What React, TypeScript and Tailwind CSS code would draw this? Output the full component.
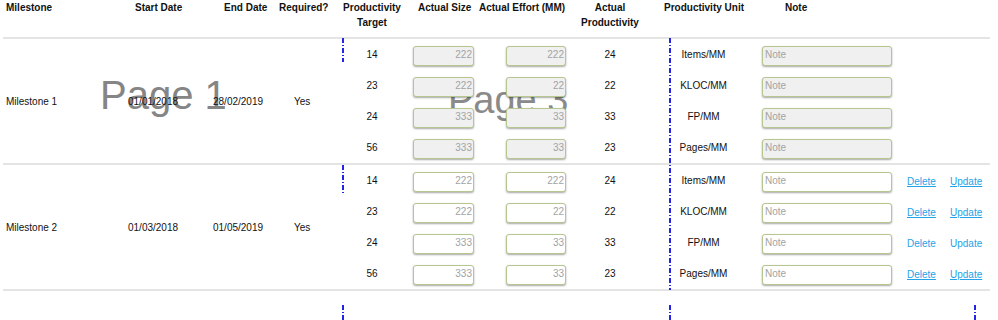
import React from 'react';

type SubRow = {
  target: string;
  size: string;
  effort: string;
  productivity: string;
  unit: string;
  linkUnderline: boolean;
};

type Milestone = {
  name: string;
  start: string;
  end: string;
  required: string;
  locked: boolean;
  rows: SubRow[];
};

const milestones: Milestone[] = [
  {
    name: 'Milestone 1',
    start: '01/01/2018',
    end: '28/02/2019',
    required: 'Yes',
    locked: true,
    rows: [
      { target: '14', size: '222', effort: '222', productivity: '24', unit: 'Items/MM', linkUnderline: true },
      { target: '23', size: '222', effort: '22', productivity: '22', unit: 'KLOC/MM', linkUnderline: true },
      { target: '24', size: '333', effort: '33', productivity: '33', unit: 'FP/MM', linkUnderline: false },
      { target: '56', size: '333', effort: '33', productivity: '23', unit: 'Pages/MM', linkUnderline: true },
    ],
  },
  {
    name: 'Milestone 2',
    start: '01/03/2018',
    end: '01/05/2019',
    required: 'Yes',
    locked: false,
    rows: [
      { target: '14', size: '222', effort: '222', productivity: '24', unit: 'Items/MM', linkUnderline: true },
      { target: '23', size: '222', effort: '22', productivity: '22', unit: 'KLOC/MM', linkUnderline: true },
      { target: '24', size: '333', effort: '33', productivity: '33', unit: 'FP/MM', linkUnderline: false },
      { target: '56', size: '333', effort: '33', productivity: '23', unit: 'Pages/MM', linkUnderline: true },
    ],
  },
];

const Box = ({ value, width, locked, align }: { value: string; width: string; locked: boolean; align: 'left' | 'right' }) => (
  <div
    className={`h-[20px] ${width} rounded-[3px] border border-[#b5c78f] shadow-[0_1px_2px_rgba(0,0,0,0.35)] text-[10px] text-[#a3a3a3] leading-[16px] ${
      locked ? 'bg-[#f0f0f0]' : 'bg-white'
    } ${align === 'right' ? 'text-right pr-[1px]' : 'text-left pl-[2px]'}`}
  >
    {value}
  </div>
);

const Divider = () => <div className="relative z-10 ml-[3px] w-[987px] h-[2px] bg-[#e4e4e4]" />;

const DashV = ({ cls }: { cls: string }) => (
  <div
    className={`absolute z-20 w-[2px] bg-[repeating-linear-gradient(to_bottom,#2424e6_0px,#2424e6_5px,transparent_5px,transparent_7px,#2424e6_7px,#2424e6_8px,transparent_8px,transparent_10px)] ${cls}`}
  />
);

const MilestoneRow = ({ m }: { m: Milestone }) => (
  <div className="relative z-10 flex text-[10px] text-[#111]">
    <div className="w-[128px] pl-[6px] flex items-center">{m.name}</div>
    <div className="w-[85px] flex items-center">{m.start}</div>
    <div className="w-[66px] flex items-center">{m.end}</div>
    <div className="w-[64px] pl-[15px] flex items-center">{m.required}</div>
    <div className="flex flex-col gap-[11px] pt-[7px] pb-[4px]">
      {m.rows.map((r, i) => (
        <div key={i} className="flex h-[20px] items-center">
          <div className="w-[58px] text-center -mt-[4px]">{r.target}</div>
          <div className="w-[78px] pl-[12px]">
            <Box value={r.size} width="w-[61px]" locked={m.locked} align="right" />
          </div>
          <div className="w-[96px] pl-[27px]">
            <Box value={r.effort} width="w-[60px]" locked={m.locked} align="right" />
          </div>
          <div className="w-[70px] text-center -mt-[4px]">{r.productivity}</div>
          <div className="w-[117px] text-center -mt-[3px]">{r.unit}</div>
          <div className="w-[145px]">
            <Box value="Note" width="w-[130px]" locked={m.locked} align="left" />
          </div>
          {!m.locked && (
            <div className="flex text-[#25a2e6] -mt-[2px]">
              <span className={`w-[43px] ${r.linkUnderline ? 'underline' : ''}`}>Delete</span>
              <span className={r.linkUnderline ? 'underline' : ''}>Update</span>
            </div>
          )}
        </div>
      ))}
    </div>
  </div>
);

export default function App() {
  return (
    <div className="relative w-[998px] h-[320px] bg-white overflow-hidden font-['Liberation_Sans',Arial,sans-serif]">
      {/* page break preview watermarks, behind the sheet content */}
      <div className="absolute z-0 left-[448px] top-[81px] text-[38px] leading-[38px] text-[#8a8a8a] pointer-events-none">Page 3</div>
      <div className="absolute z-0 left-[100px] top-[75px] text-[40px] leading-[40px] text-[#858585] pointer-events-none">Page 1</div>

      {/* header */}
      <div className="relative z-10 flex h-[37px] text-[10px] font-bold leading-[15px] text-[#111]">
        <div className="w-[128px] pl-[6px]">Milestone</div>
        <div className="w-[85px] pl-[7px]">Start Date</div>
        <div className="w-[66px] pl-[11px]">End Date</div>
        <div className="w-[64px]">Required?</div>
        <div className="w-[58px] text-center">Productivity<br />Target</div>
        <div className="w-[78px] pl-[17px]">Actual Size</div>
        <div className="w-[96px]">Actual Effort (MM)</div>
        <div className="w-[70px] text-center">Actual<br />Productivity</div>
        <div className="w-[117px] pl-[19px]">Productivity Unit</div>
        <div className="pl-[23px]">Note</div>
      </div>
      <Divider />
      <MilestoneRow m={milestones[0]} />
      <Divider />
      <MilestoneRow m={milestones[1]} />
      <Divider />

      <DashV cls="left-[342px] top-[38px] h-[24px]" />
      <DashV cls="left-[342px] top-[165px] h-[28px]" />
      <DashV cls="left-[342px] top-[305px] h-[15px]" />
      <DashV cls="left-[669px] top-[38px] h-[252px]" />
      <DashV cls="left-[669px] top-[305px] h-[15px]" />
      <DashV cls="left-[974px] top-[305px] h-[15px]" />
    </div>
  );
}
